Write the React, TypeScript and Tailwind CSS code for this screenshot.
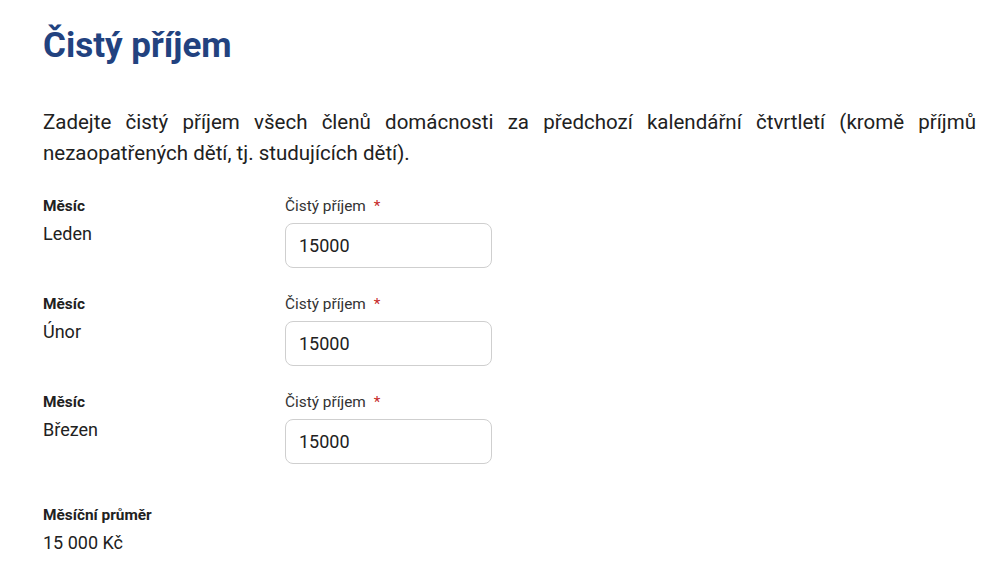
import React from "react";

const rows = [
  { month: "Leden", value: "15000" },
  { month: "Únor", value: "15000" },
  { month: "Březen", value: "15000" },
];

export default function App() {
  return (
    <div className="min-h-[561px] bg-white pl-[43px] pt-[22px] text-[#212121]" style={{ fontFamily: "Roboto, 'Noto Sans', sans-serif" }}>
      <div className="w-[933px]">
        <h1 className="text-[35px] font-bold leading-[48px] text-[#22427f]">Čistý příjem</h1>
        <p className="mt-[37px] text-justify text-[20.5px] leading-[31px]">
          Zadejte čistý příjem všech členů domácnosti za předchozí kalendářní čtvrtletí (kromě příjmů nezaopatřených dětí, tj. studujících dětí).
        </p>
        <div className="mt-[27px] flex flex-col gap-[10px]">
          {rows.map((r) => (
            <div key={r.month} className="flex h-[88px]">
              <div className="w-[242px]">
                <div className="text-[15.4px] font-bold leading-[20px]">Měsíc</div>
                <div className="mt-[6px] text-[18px] leading-[24px]">{r.month}</div>
              </div>
              <div>
                <div className="text-[15.4px] leading-[20px] text-[#333]">
                  Čistý příjem <span className="ml-[4px] text-[#c62828]">*</span>
                </div>
                <input
                  readOnly
                  value={r.value}
                  className="mt-[7px] h-[45px] w-[207px] rounded-[8px] border border-[#cfcfcf] px-[13px] text-[18px] text-[#212121] outline-none"
                  style={{ fontFamily: "Roboto, sans-serif" }}
                />
              </div>
            </div>
          ))}
        </div>
        <div className="mt-[25px]">
          <div className="text-[15.4px] font-bold leading-[20px]">Měsíční průměr</div>
          <div className="mt-[6px] text-[18px] leading-[24px]">15 000 Kč</div>
        </div>
      </div>
    </div>
  );
}
